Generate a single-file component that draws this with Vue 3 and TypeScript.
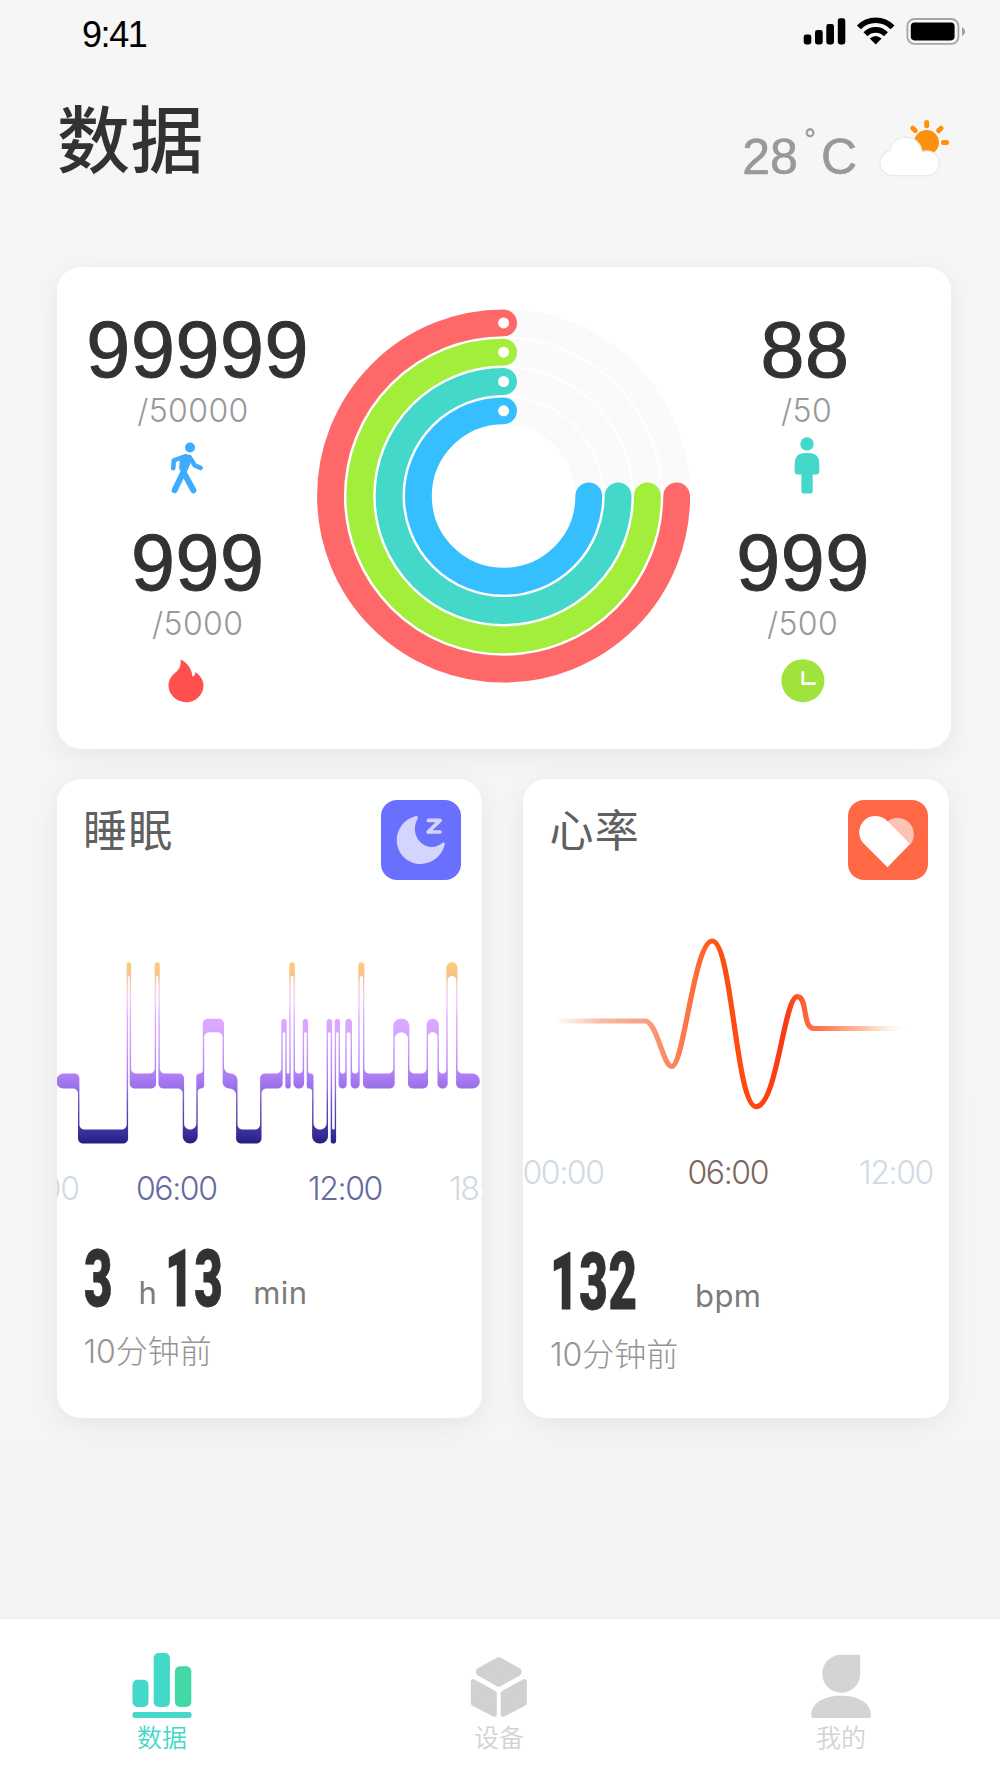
<script setup lang="ts">
interface Metric {
  key: string
  value: string
  goal: string
}

interface AxisLabel {
  text: string
  active: boolean
}

interface Ring {
  color: string
  radius: number
}

type Stage = 'awake' | 'rem' | 'light' | 'deep'

const leftMetrics: Metric[] = [
  { key: 'steps', value: '99999', goal: '/50000' },
  { key: 'calories', value: '999', goal: '/5000' },
]

const rightMetrics: Metric[] = [
  { key: 'stand', value: '88', goal: '/50' },
  { key: 'duration', value: '999', goal: '/500' },
]

const RING_CX = 186.6
const RING_CY = 187
const rings: Ring[] = [
  { color: '#ff6868', radius: 173.1 },
  { color: '#a2ee3a', radius: 143.8 },
  { color: '#43d8c9', radius: 114.5 },
  { color: '#35bffe', radius: 85.2 },
]

// Three quarters of a turn, clockwise from three o'clock up to twelve.
function ringArc(r: number): string {
  return `M${RING_CX + r} ${RING_CY}A${r} ${r} 0 1 1 ${RING_CX} ${RING_CY - r}`
}

const sleepLabels: AxisLabel[] = [
  { text: '00:00', active: false },
  { text: '06:00', active: true },
  { text: '12:00', active: true },
  { text: '18:00', active: false },
]

const heartLabels: AxisLabel[] = [
  { text: '00:00', active: false },
  { text: '06:00', active: true },
  { text: '12:00', active: false },
]

// Vertical extent [top, bottom] of the band of each sleep stage.
const stageBand: Record<Stage, [number, number]> = {
  awake: [962.3, 976],
  rem: [1018.8, 1032.3],
  light: [1073.6, 1088.6],
  deep: [1129.5, 1143.6],
}

const sleepStart = 56.2
const sleepStages: Array<[Stage, number]> = [
  ['light', 78.7], ['deep', 127.4], ['awake', 130.4], ['light', 155.4],
  ['awake', 159.1], ['light', 183.4], ['deep', 197], ['light', 203.5],
  ['rem', 223.3], ['light', 236.8], ['deep', 260.8], ['light', 282],
  ['rem', 286], ['light', 290], ['awake', 294.2], ['light', 303.4],
  ['rem', 307.4], ['light', 312.8], ['deep', 327.3], ['rem', 331.4],
  ['deep', 335.4], ['rem', 339.3], ['light', 346], ['rem', 351.3],
  ['light', 359], ['awake', 363.7], ['light', 394], ['rem', 408.7],
  ['light', 427.3], ['rem', 438.2], ['light', 447], ['awake', 456.8],
  ['light', 479.8],
]

// Outline of the hypnogram: thick bands joined by hairline risers, every corner rounded.
function hypnogramPath(): string {
  const half = 0.7
  const top: number[][] = [[sleepStart, stageBand.light[0]]]
  const bottom: number[][] = [[sleepStart, stageBand.light[1]]]
  sleepStages.forEach(([stage, x], i) => {
    const [t, b] = stageBand[stage]
    const next = sleepStages[i + 1]
    if (!next) {
      top.push([x, t])
      bottom.push([x, b])
      return
    }
    const [nt, nb] = stageBand[next[0]]
    const shift = nt < t ? -half : half
    top.push([x + shift, t], [x + shift, nt])
    bottom.push([x - shift, b], [x - shift, nb])
  })
  const pts = [...top, ...bottom.reverse()]
  const n = pts.length
  const last = sleepStages[sleepStages.length - 1][1]
  const dist = (a: number[], b: number[]) => Math.hypot(a[0] - b[0], a[1] - b[1])
  const toward = (a: number[], b: number[], d: number) => {
    const k = d / dist(a, b)
    return `${(a[0] + (b[0] - a[0]) * k).toFixed(2)} ${(a[1] + (b[1] - a[1]) * k).toFixed(2)}`
  }
  let d = ''
  pts.forEach((p, i) => {
    const prev = pts[(i + n - 1) % n]
    const next = pts[(i + 1) % n]
    const isEnd = p[0] === sleepStart || p[0] === last
    const span = Math.max(Math.abs(p[0] - prev[0]), Math.abs(p[0] - next[0]))
    const limit = isEnd || span < 17 ? 7.5 : 5
    const r = Math.min(limit, dist(prev, p) / 2, dist(p, next) / 2)
    const c = r * 0.448
    d += `${i === 0 ? 'M' : 'L'}${toward(p, prev, r)}C${toward(p, prev, c)} ${toward(p, next, c)} ${toward(p, next, r)}`
  })
  return d + 'Z'
}

const sleepPath = hypnogramPath()
</script>

<template>
  <div class="screen">
    <div class="status">
      <span class="clock">9:41</span>
      <svg class="status-icons" viewBox="803 16 163 30" width="163" height="30">
        <rect x="803.7" y="34.5" width="7.6" height="10" rx="2.4" />
        <rect x="815" y="30" width="7.7" height="14.5" rx="2.4" />
        <rect x="826.3" y="24" width="7.7" height="20.5" rx="2.4" />
        <rect x="837.8" y="18.3" width="7.5" height="26.2" rx="2.4" />
        <path d="M858.9 27.4A23.4 23.4 0 0 1 892.5 27.4M865.5 34.2A14.2 14.2 0 0 1 885.9 34.2" fill="none" stroke="#000" stroke-width="5.6" />
        <path d="M869.8 38.6Q875.7 33.4 881.6 38.6L875.7 44.4Z" />
        <rect x="907.4" y="19" width="51" height="24.9" rx="7" fill="none" stroke="#a6a6a6" stroke-width="1.8" />
        <rect x="910.8" y="22.4" width="43.8" height="18" rx="3.8" />
        <path d="M962 27.3Q965 28.6 965 31.6T962 36Z" fill="#a0a0a0" />
      </svg>
    </div>

    <header class="header">
      <h1 class="title">数据</h1>
      <div class="weather">
        <span class="temp">28</span>
        <span class="degree">°</span>
        <span class="temp unit-c">C</span>
        <svg class="weather-icon" viewBox="877 118 74 60" width="74" height="60">
          <g stroke="#ff910f" stroke-width="5" stroke-linecap="round">
            <circle cx="926.5" cy="142.5" r="10" fill="#ff910f" />
            <path d="M926.7 122.5v3.2M912.7 128.2l2.6 2.4M938.6 130.6l2.5-2.4M943.4 142.5h3.2" />
          </g>
          <path d="M892 175.8A13 13 0 0 1 889.8 150.2A16.3 16.3 0 0 1 922 152A12.4 12.4 0 1 1 926.5 175.8Z" fill="#fff" stroke="#ebebeb" stroke-width="1.4" />
        </svg>
      </div>
    </header>

    <section class="card summary">
      <div class="metrics left">
        <div v-for="m in leftMetrics" :key="m.key" class="metric" :class="m.key">
          <span class="value">{{ m.value }}</span>
          <span class="goal">{{ m.goal }}</span>
          <svg v-if="m.key === 'steps'" class="glyph" viewBox="157 436 60 60" width="60" height="60" fill="none" stroke="#3fabff" stroke-linecap="round" stroke-linejoin="round">
            <circle cx="190" cy="447.5" r="5" fill="#3fabff" stroke="none" />
            <path d="M185.8 456.2L173.8 460.4L173.2 468.3M189.8 457.6L194.8 465.4L200.6 467.9" stroke-width="4.6" />
            <path d="M184 457.6L189.2 457.2L187.6 464L184.6 470.5L181.6 468L182.4 460Z" fill="#3fabff" stroke-width="5" />
            <path d="M183.4 472L174.6 490.3M183.4 472L193.4 490.3" stroke-width="6" />
          </svg>
          <svg v-else class="glyph" viewBox="155.5 649 60 60" width="60" height="60">
            <path fill="#ff4f4f" d="M180 658.6C187 661.5 192 669.5 191.8 675.6C193.6 675.4 194.8 673.6 195 671C200 674.5 203 679.5 203 684.2C203 693.8 195.2 701.2 185.6 701.2C176 701.2 168 693.9 168 684.6C168 679.2 170.8 675.2 175 671.6C179.2 668 180.8 664.6 180 658.6Z" />
          </svg>
        </div>
      </div>

      <svg class="rings" viewBox="0 0 373.2 374" width="373.2" height="374" fill="none">
        <circle v-for="r in rings" :key="r.color" :cx="RING_CX" :cy="RING_CY" :r="r.radius" stroke="#fafafa" stroke-width="27.4" />
        <g v-for="r in rings" :key="r.color">
          <path :d="ringArc(r.radius)" :stroke="r.color" stroke-width="26.8" stroke-linecap="round" />
          <circle :cx="RING_CX" :cy="RING_CY - r.radius" r="5.5" fill="#fff" />
        </g>
      </svg>

      <div class="metrics right">
        <div v-for="m in rightMetrics" :key="m.key" class="metric" :class="m.key">
          <span class="value">{{ m.value }}</span>
          <span class="goal">{{ m.goal }}</span>
          <svg v-if="m.key === 'stand'" class="glyph" viewBox="776.5 436 60 60" width="60" height="60" fill="#43d8c9">
            <circle cx="806.5" cy="443.9" r="6.7" />
            <path d="M794.2 464Q794.2 453 805 453H808Q818.8 453 818.8 464V472Q818.8 474.4 816.4 474.4H812.2V491Q812.2 493.5 809.7 493.5H803.4Q800.9 493.5 800.9 491V474.4H796.6Q794.2 474.4 794.2 472Z" />
          </svg>
          <svg v-else class="glyph" viewBox="772.5 649 60 60" width="60" height="60">
            <circle cx="802.4" cy="679.7" r="21.5" fill="#9fe33c" />
            <path d="M802.3 671.5V682.6H814" fill="none" stroke="#fff" stroke-width="2.8" stroke-linecap="round" stroke-linejoin="round" />
          </svg>
        </div>
      </div>
    </section>

    <div class="cards">
      <section class="card detail sleep">
        <div class="card-head">
          <h2 class="card-title">睡眠</h2>
          <svg class="badge" viewBox="381.5 800 80 80" width="80" height="80">
            <rect x="381.5" y="800" width="80" height="80" rx="16" fill="#6a70fe" />
            <path fill="#d3d5fe" d="M415.8 816.2C418 815.5 419 817 418 818.8C410.5 833 420.5 847 432 847C437 847 440 845 442.8 843C444.4 842 445.6 843 445.2 844.8C442.5 856 432.5 864 421 864C407.7 864 397.2 853.3 397.2 840C397.2 829 405 819 415.8 816.2Z" />
            <path d="M428.8 820.4H440.6L428.6 832H440.4" fill="none" stroke="#d3d5fe" stroke-width="3.6" stroke-linecap="round" stroke-linejoin="round" />
          </svg>
        </div>
        <svg class="chart" viewBox="56 950 426 205" width="426" height="205">
          <defs>
            <linearGradient id="sleepFill" gradientUnits="userSpaceOnUse" x1="0" y1="962" x2="0" y2="1144">
              <stop offset="0" stop-color="#fecf69" />
              <stop offset="0.075" stop-color="#f9bf92" />
              <stop offset="0.14" stop-color="#f7cfd0" />
              <stop offset="0.22" stop-color="#eecdfb" />
              <stop offset="0.31" stop-color="#dcaaff" />
              <stop offset="0.4" stop-color="#d6a4ff" />
              <stop offset="0.61" stop-color="#b281f9" />
              <stop offset="0.69" stop-color="#9a70e8" />
              <stop offset="0.78" stop-color="#6a50c8" />
              <stop offset="0.92" stop-color="#4034a0" />
              <stop offset="1" stop-color="#231e82" />
            </linearGradient>
          </defs>
          <path :d="sleepPath" fill="url(#sleepFill)" />
        </svg>
        <div class="axis">
          <span v-for="l in sleepLabels" :key="l.text" class="tick" :class="{ active: l.active }">{{ l.text }}</span>
        </div>
        <div class="reading">
          <span class="figure"><b>3</b></span>
          <span class="unit hours">h</span>
          <span class="figure minutes"><b>13</b></span>
          <span class="unit mins">min</span>
        </div>
        <p class="ago">10分钟前</p>
      </section>

      <section class="card detail heart">
        <div class="card-head">
          <h2 class="card-title">心率</h2>
          <svg class="badge" viewBox="847.5 800 80 80" width="80" height="80">
            <rect x="847.5" y="800" width="80" height="80" rx="16" fill="#ff6845" />
            <path fill="#ffc3b6" d="M887 821.5A16.3 16.3 0 0 1 909.8 844.5L900 846L880 826Z" />
            <path fill="#fff" d="M864.2 844.5A16.3 16.3 0 1 1 887.2 821.5L909.6 843.9L887 867.2Z" />
          </svg>
        </div>
        <svg class="chart" viewBox="523 925 426 190" width="426" height="190">
          <defs>
            <linearGradient id="pulse" gradientUnits="userSpaceOnUse" x1="555" y1="0" x2="905" y2="0">
              <stop offset="0" stop-color="#f9b8a2" stop-opacity="0" />
              <stop offset="0.13" stop-color="#f8b39c" stop-opacity="0.9" />
              <stop offset="0.27" stop-color="#f79d7c" />
              <stop offset="0.35" stop-color="#fb8056" />
              <stop offset="0.42" stop-color="#fe6530" />
              <stop offset="0.46" stop-color="#ff5210" />
              <stop offset="0.57" stop-color="#ff4510" />
              <stop offset="0.66" stop-color="#fb3914" />
              <stop offset="0.71" stop-color="#ff6038" />
              <stop offset="0.77" stop-color="#ff7d55" />
              <stop offset="0.88" stop-color="#ffbb98" stop-opacity="0.9" />
              <stop offset="1" stop-color="#ffe0cc" stop-opacity="0" />
            </linearGradient>
          </defs>
          <path d="M555 1021H645C657 1021 663 1066.5 671.7 1066.5C684 1066.5 694 941 712.3 941C732 941 736 1106.6 756 1106.6C777 1106.6 784 996.6 797.3 996.6C808 996.6 802 1028.5 814 1028.5H905" fill="none" stroke="url(#pulse)" stroke-width="5.2" stroke-linejoin="round" />
        </svg>
        <div class="axis">
          <span v-for="l in heartLabels" :key="l.text" class="tick" :class="{ active: l.active }">{{ l.text }}</span>
        </div>
        <div class="reading">
          <span class="figure pulse"><b>132</b></span>
          <span class="unit bpm">bpm</span>
        </div>
        <p class="ago">10分钟前</p>
      </section>
    </div>

    <nav class="tabs">
      <a class="tab data active">
        <svg viewBox="127.5 1650 70 70" width="70" height="70" fill="#43d8c9">
          <rect x="133" y="1679.8" width="16" height="27.2" rx="5" />
          <rect x="154.2" y="1653" width="16.2" height="54" rx="5" />
          <rect x="175.4" y="1666.3" width="16.4" height="40.7" rx="5" fill="#43d9a5" />
          <rect x="133" y="1712" width="59" height="6" rx="2.2" />
        </svg>
        <span class="tab-label">数据</span>
      </a>
      <a class="tab device">
        <svg viewBox="464 1650 70 70" width="70" height="70" fill="#d1d1d1" stroke="#d1d1d1" stroke-width="5" stroke-linejoin="round">
          <path d="M498.7 1659.5L519 1670.6L519 1673L498.7 1684.4L478.6 1673L478.6 1670.6Z" />
          <path d="M473.3 1681.6L494.3 1693.2V1714.2L473.3 1703.2Z" />
          <path d="M524.3 1681.6L503.2 1693.2V1714.2L524.3 1703.2Z" />
        </svg>
        <span class="tab-label">设备</span>
      </a>
      <a class="tab mine">
        <svg viewBox="806 1650 70 70" width="70" height="70" fill="#d4d4d4">
          <path d="M860.2 1654.7V1673.3A19 19 0 1 1 841.2 1654.7Z" />
          <path d="M811.2 1716V1715C811.2 1703 824 1695.8 841.2 1695.8S870.8 1703 870.8 1715V1716Q870.8 1718 868.6 1718H813.4Q811.2 1718 811.2 1716Z" />
        </svg>
        <span class="tab-label">我的</span>
      </a>
    </nav>
  </div>
</template>

<style>
body {
  margin: 0;
  background: #f3f3f3;
}
</style>

<style scoped>
.screen {
  width: 1000px;
  height: 1778px;
  overflow: hidden;
  display: flex;
  flex-direction: column;
  background: linear-gradient(#f6f6f6, #f5f5f5 1442px, #f3f3f3 1442px);
  font-family: "Liberation Sans", "Noto Sans CJK SC", sans-serif;
  color: #323232;
}
svg {
  display: block;
  flex: none;
}
h1,
h2,
p {
  margin: 0;
}
.status {
  height: 46px;
  padding: 16px 34px 0 82px;
  box-sizing: border-box;
  display: flex;
  justify-content: space-between;
}
.clock {
  font-size: 36px;
  line-height: 38px;
  letter-spacing: -1.4px;
  color: #000;
}
.header {
  height: 221px;
  padding: 51px 49px 0 57px;
  box-sizing: border-box;
  display: flex;
  justify-content: space-between;
  align-items: flex-start;
}
.title {
  margin-top: 1px;
  font: 500 73px/74px "Noto Sans CJK SC", sans-serif;
  letter-spacing: 0.5px;
}
.weather {
  display: flex;
  align-items: flex-start;
  color: #999;
}
.temp {
  margin-top: 35px;
  font-size: 50px;
  line-height: 50px;
  -webkit-text-stroke: 0.6px #999;
}
.degree {
  margin: 28px 0 0 6.5px;
  font-size: 29px;
  line-height: 29px;
  -webkit-text-stroke: 0.4px #999;
}
.unit-c {
  margin-left: 5px;
}
.weather-icon {
  margin: 21px 0 0 20px;
}
.card {
  background: #fff;
  border-radius: 24px;
  box-shadow: 0 6px 28px rgba(0, 0, 0, 0.065);
}
.summary {
  margin: 0 49px 0 56.5px;
  height: 481.6px;
  flex: none;
  display: flex;
}
.metrics {
  padding-top: 42.6px;
  box-sizing: border-box;
  display: flex;
  flex-direction: column;
  gap: 27px;
}
.metrics.left {
  width: 260.5px;
  padding-left: 22px;
}
.metrics.right {
  width: 261px;
  padding-right: 33px;
}
.rings {
  margin-top: 42px;
}
.metric {
  display: flex;
  flex-direction: column;
  align-items: center;
}
.value {
  font-size: 79px;
  line-height: 80px;
  letter-spacing: 0.6px;
  -webkit-text-stroke: 1px #323232;
}
.goal {
  margin-top: 5px;
  font: 320 32px/32px Inter, sans-serif;
  letter-spacing: 0.4px;
  color: #999;
}
.glyph {
  margin-top: 9.5px;
}
.steps .goal {
  margin-left: -9.5px;
}
.steps .glyph {
  margin-left: -21px;
}
.calories .glyph {
  margin-left: -24px;
}
.stand .value {
  margin-left: 2px;
}
.stand .goal,
.stand .glyph {
  margin-left: 5px;
}
.duration .value {
  margin-left: -2px;
}
.duration .goal,
.duration .glyph {
  margin-left: -3px;
}
.cards {
  margin: 30.4px 51px 0 56.5px;
  display: grid;
  grid-template-columns: 425.5px 425.5px;
  gap: 41px;
}
.detail {
  height: 639px;
  overflow: hidden;
  display: flex;
  flex-direction: column;
}
.card-head {
  flex: none;
  height: 101px;
  padding: 21px 21px 0 26.5px;
  box-sizing: border-box;
  display: flex;
  justify-content: space-between;
}
.card-title {
  margin-top: 6px;
  font: 400 44px/44px "Noto Sans CJK SC", sans-serif;
  letter-spacing: 1.2px;
  color: #606060;
}
.sleep .chart {
  margin: 70px 0 0 -0.5px;
}
.heart .chart {
  margin-top: 45px;
}
.axis {
  display: flex;
  flex: none;
  font: 320 32px/32px Inter, sans-serif;
  letter-spacing: -1.4px;
  color: #d0dae4;
}
.tick {
  flex: none;
  width: 80px;
  text-align: center;
}
.sleep .axis {
  margin: 18px 0 0 -59px;
}
.sleep .tick:nth-child(2) {
  margin-left: 58.5px;
}
.sleep .tick:nth-child(3) {
  margin-left: 89px;
}
.sleep .tick:nth-child(4) {
  margin-left: 61px;
}
.sleep .tick.active {
  color: #666a9f;
}
.heart .axis {
  margin: 42.4px 0 0 -0.5px;
}
.heart .tick:nth-child(2) {
  margin-left: 85px;
}
.heart .tick:nth-child(3) {
  margin-left: 88.5px;
}
.heart .tick.active {
  color: #7d6660;
}
.reading {
  flex: none;
  height: 80px;
  margin: 34px 0 0 27px;
  display: flex;
  align-items: baseline;
}
.heart .reading {
  margin-top: 52.6px;
}
.figure {
  flex: none;
  width: 29px;
  font: 700 80px/80px Roboto, sans-serif;
  letter-spacing: 1.2px;
  white-space: nowrap;
}
.figure b {
  display: inline-block;
  transform: scaleX(0.615);
  transform-origin: 0 0;
  -webkit-text-stroke: 0.8px #323232;
}
.figure.minutes {
  width: 58px;
  margin-left: 8px;
}
.figure.pulse {
  width: 87px;
}
.unit {
  font: 430 31px/31px Inter, sans-serif;
  letter-spacing: 0.4px;
  color: #7b7b7b;
  transform: translateY(-2.5px);
}
.hours {
  margin-left: 26px;
}
.mins {
  margin-left: 30px;
}
.bpm {
  margin-left: 58px;
}
.ago {
  margin: 17px 0 0 27px;
  font: 320 32px/32px Inter, "Noto Sans CJK SC", sans-serif;
  color: #959595;
}
.heart .ago {
  margin-top: 17.5px;
}
.tabs {
  margin-top: auto;
  height: 160px;
  flex: none;
  box-sizing: border-box;
  border-top: 1px solid #ececec;
  padding-top: 31px;
  display: flex;
  background: #fff;
}
.tab {
  flex: none;
  display: flex;
  flex-direction: column;
  align-items: center;
  color: #d3d3d3;
}
.tab.active {
  color: #43d8c9;
}
.data {
  width: 324px;
}
.device {
  width: 350px;
}
.mine {
  width: 334px;
}
.tab-label {
  margin-top: 4px;
  font: 350 25px/25px "Noto Sans CJK SC", sans-serif;
}
</style>
